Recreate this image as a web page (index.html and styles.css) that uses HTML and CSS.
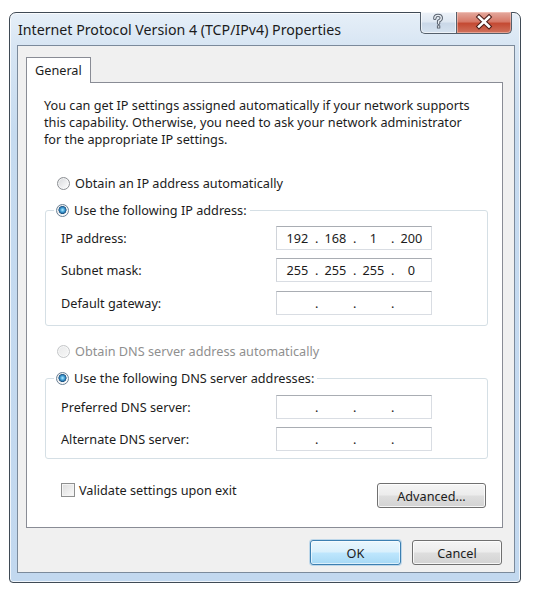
FILE: index.html
```html
<!DOCTYPE html>
<html>
<head>
<meta charset="utf-8">
<link rel="stylesheet" href="styles.css">
</head>
<body>
<div class="window">
  <div class="titlebar">
    <div class="title">Internet Protocol Version 4 (TCP/IPv4) Properties</div>
    <div class="caption-btns">
      <div class="cap help">
        <svg width="36" height="22" viewBox="0 0 36 22">
          <path d="M14.8 7.4 Q14.8 4.4 18 4.4 Q21.3 4.4 21.3 7.1 Q21.3 9.1 18.6 10.1 L18.6 12.3" fill="none" stroke="#5b6470" stroke-width="3.4" stroke-linecap="round" stroke-linejoin="round"/>
          <path d="M14.8 7.4 Q14.8 4.4 18 4.4 Q21.3 4.4 21.3 7.1 Q21.3 9.1 18.6 10.1 L18.6 12.3" fill="none" stroke="#e9eef4" stroke-width="1.3" stroke-linecap="round" stroke-linejoin="round"/>
          <rect x="16.9" y="14.2" width="3.4" height="3.4" rx="0.6" fill="#5b6470"/>
          <rect x="17.9" y="15.2" width="1.4" height="1.4" fill="#e9eef4"/>
        </svg>
      </div>
      <div class="cap close">
        <svg width="56" height="22" viewBox="0 0 56 22">
          <path d="M23 6 L33 15.5 M33 6 L23 15.5" fill="none" stroke="#4a1c17" stroke-width="4.6" stroke-linecap="square"/>
          <path d="M23 6 L33 15.5 M33 6 L23 15.5" fill="none" stroke="#ffffff" stroke-width="2.6" stroke-linecap="square"/>
        </svg>
      </div>
    </div>
  </div>
  <div class="client">
    <div class="tabs"><div class="tab">General</div></div>
    <div class="panel">
      <div class="intro">
        <div>You can get IP settings assigned automatically if your network supports</div>
        <div>this capability. Otherwise, you need to ask your network administrator</div>
        <div>for the appropriate IP settings.</div>
      </div>

      <div class="radio-row first"><span class="radio"></span><span>Obtain an IP address automatically</span></div>
      <fieldset class="group ip-group">
        <legend class="radio-row"><span class="radio checked"></span><span>Use the following IP address:</span></legend>
        <div class="field-row">
          <span class="label">IP address:</span>
          <div class="ipbox"><span class="oct">192</span><span class="dot">.</span><span class="oct">168</span><span class="dot">.</span><span class="oct">1</span><span class="dot">.</span><span class="oct">200</span></div>
        </div>
        <div class="field-row">
          <span class="label">Subnet mask:</span>
          <div class="ipbox"><span class="oct">255</span><span class="dot">.</span><span class="oct">255</span><span class="dot">.</span><span class="oct">255</span><span class="dot">.</span><span class="oct">0</span></div>
        </div>
        <div class="field-row">
          <span class="label">Default gateway:</span>
          <div class="ipbox"><span class="oct"></span><span class="dot">.</span><span class="oct"></span><span class="dot">.</span><span class="oct"></span><span class="dot">.</span><span class="oct"></span></div>
        </div>
      </fieldset>

      <div class="radio-row disabled dns-auto"><span class="radio"></span><span>Obtain DNS server address automatically</span></div>
      <fieldset class="group dns-group">
        <legend class="radio-row"><span class="radio checked"></span><span>Use the following DNS server addresses:</span></legend>
        <div class="field-row">
          <span class="label">Preferred DNS server:</span>
          <div class="ipbox"><span class="oct"></span><span class="dot">.</span><span class="oct"></span><span class="dot">.</span><span class="oct"></span><span class="dot">.</span><span class="oct"></span></div>
        </div>
        <div class="field-row">
          <span class="label">Alternate DNS server:</span>
          <div class="ipbox"><span class="oct"></span><span class="dot">.</span><span class="oct"></span><span class="dot">.</span><span class="oct"></span><span class="dot">.</span><span class="oct"></span></div>
        </div>
      </fieldset>

      <div class="bottom-row">
        <div class="check-row"><span class="checkbox"></span><span>Validate settings upon exit</span></div>
        <button class="btn adv">Advanced...</button>
      </div>
    </div>
    <div class="dialog-btns">
      <button class="btn ok">OK</button>
      <button class="btn cancel">Cancel</button>
    </div>
  </div>
</div>
</body>
</html>
```

FILE: styles.css
```css
* { box-sizing: border-box; }

html, body {
  margin: 0;
  padding: 0;
  background: #ffffff;
}

body {
  font-family: "Noto Sans", "Open Sans", sans-serif;
  font-size: 12.7px;
  color: #1c1c1c;
}

.window {
  margin: 12px 0 0 9px;
  width: 512px;
  height: 571px;
  border: 1px solid #3f4a55;
  border-radius: 7px 7px 4px 4px;
  padding: 0 5px 0 7px;
  background: linear-gradient(to bottom, #e6eff8 0px, #d7e5f3 34px, #c6dbf0 120px, #c2d8ef 100%);
  box-shadow: inset 0 0 0 1px rgba(255,255,255,0.75);
}

.titlebar {
  height: 32px;
  display: flex;
  justify-content: space-between;
  align-items: flex-start;
}

.title {
  padding: 9px 0 0 1px;
  font-size: 14.2px;
  line-height: 16px;
  color: #1b1b1b;
  white-space: nowrap;
}

.caption-btns {
  display: flex;
  margin-top: -1px;
  margin-right: 3px;
}

.cap {
  height: 22px;
  border: 1px solid #55606c;
  border-top: none;
  display: flex;
}

.cap svg { display: block; margin: -1px; }

.help {
  width: 36px;
  border-radius: 0 0 0 5px;
  border-right: none;
  background: linear-gradient(to bottom, #eef3f9 0%, #dfe8f2 45%, #cad8e8 55%, #d5e2ef 100%);
  box-shadow: inset 0 0 0 1px rgba(255,255,255,0.6);
}

.close {
  width: 56px;
  border-radius: 0 0 5px 0;
  background: linear-gradient(to bottom, #e4aa9f 0%, #d77a69 45%, #c44a33 55%, #d0725d 100%);
  box-shadow: inset 0 0 0 1px rgba(255,220,210,0.45);
}

.client {
  height: 528px;
  border: 1px solid #7b8a9b;
  background: #f0f0f0;
  padding: 11px 11px 0 8px;
}

.tabs {
  display: flex;
  height: 25px;
}

.tab {
  position: relative;
  z-index: 1;
  height: 26px;
  padding: 4px 8px 0 8px;
  border: 1px solid #898c95;
  border-bottom: none;
  background: #ffffff;
  line-height: 16px;
}

.panel {
  height: 446px;
  border: 1px solid #898c95;
  background: #ffffff;
  padding: 0 15px 0 17px;
  display: flex;
  flex-direction: column;
}

.intro {
  margin: 14px 0 0 0;
  line-height: 17px;
  white-space: nowrap;
}

.radio-row {
  display: flex;
  align-items: center;
  gap: 5px;
  height: 16px;
  line-height: 16px;
  white-space: nowrap;
}

.radio-row.first {
  margin: 27px 0 0 13px;
}

.radio {
  flex: none;
  width: 13px;
  height: 13px;
  border-radius: 50%;
  border: 1px solid #8c8f93;
  background: linear-gradient(135deg, #d6d8db 0%, #f3f4f5 70%, #fbfbfb 100%);
  box-shadow: inset 0 0 0 1px rgba(255,255,255,0.55);
}

.radio.checked {
  border-color: #6d8296;
  background:
    radial-gradient(circle at 50% 45%, #b8ecff 0px, #58b3e3 1.6px, #2a78b0 3px, #1b4f7c 3.8px, rgba(27,79,124,0) 4.3px),
    linear-gradient(135deg, #d6d8db 0%, #f3f4f5 70%, #fbfbfb 100%);
}

.disabled { color: #8f8f8f; }
.disabled .radio {
  border-color: #c4c6c8;
  background: linear-gradient(135deg, #e8e9ea 0%, #f7f7f7 100%);
}

.group {
  margin: 0 0 0 1px;
  width: 443px;
  border: 1px solid #d5dfe5;
  border-radius: 3px;
  padding: 0 0 0 15px;
  min-inline-size: 0;
}

.group legend {
  margin-left: -7px;
  padding: 0 3px 0 2px;
}

.ip-group {
  margin-top: 11px;
  padding-top: 8px;
  padding-bottom: 10px;
}

.dns-auto {
  margin: 17px 0 0 13px;
}

.dns-group {
  margin-top: 11px;
  padding-top: 9px;
  padding-bottom: 7px;
}

.field-row {
  display: flex;
  align-items: center;
  height: 24px;
}

.field-row + .field-row { margin-top: 8px; }

.ip-group .field-row + .field-row + .field-row { margin-top: 9px; }

.label {
  width: 215px;
  flex: none;
  white-space: nowrap;
}

.ipbox {
  width: 156px;
  height: 24px;
  border: 1px solid #d9dde3;
  border-top-color: #a9adb3;
  border-left-color: #d0d4da;
  display: flex;
  align-items: center;
  padding: 0 3px;
  background: #ffffff;
}

.oct {
  width: 35px;
  text-align: center;
  flex: none;
}

.dot {
  width: 3px;
  text-align: center;
  flex: none;
}

.bottom-row {
  display: flex;
  justify-content: space-between;
  align-items: flex-start;
  margin-top: 23px;
  padding-left: 17px;
  padding-right: 0;
}

.check-row {
  display: flex;
  align-items: center;
  gap: 4px;
  height: 16px;
  line-height: 16px;
}

.checkbox {
  width: 14px;
  height: 14px;
  border: 1px solid #8e8f8f;
  background: linear-gradient(135deg, #dcdcdc 0%, #eeeeee 60%, #fafafa 100%);
  box-shadow: inset 0 0 0 1px #f4f4f4;
}

.btn {
  font-family: inherit;
  font-size: 12.7px;
  color: #1c1c1c;
  height: 25px;
  border: 1px solid #707070;
  border-radius: 3px;
  background: linear-gradient(to bottom, #f5f5f5 0%, #ececec 48%, #dedede 52%, #d3d3d3 100%);
  box-shadow: inset 0 0 0 1px rgba(255,255,255,0.8);
  padding: 0;
  margin: 1px 1px 0 0;
}

.adv { width: 109px; }

.dialog-btns {
  display: flex;
  justify-content: flex-end;
  gap: 10px;
  margin-top: 11px;
}

.ok {
  width: 91px;
  border-color: #3c7fb1;
  background: linear-gradient(to bottom, #eaf6fd 0%, #d9f0fc 48%, #bee6fd 52%, #a7d9f5 100%);
  box-shadow: inset 0 0 0 1px rgba(255,255,255,0.6), 0 0 0 1px rgba(96,170,220,0.35);
}

.cancel { width: 90px; }
```
